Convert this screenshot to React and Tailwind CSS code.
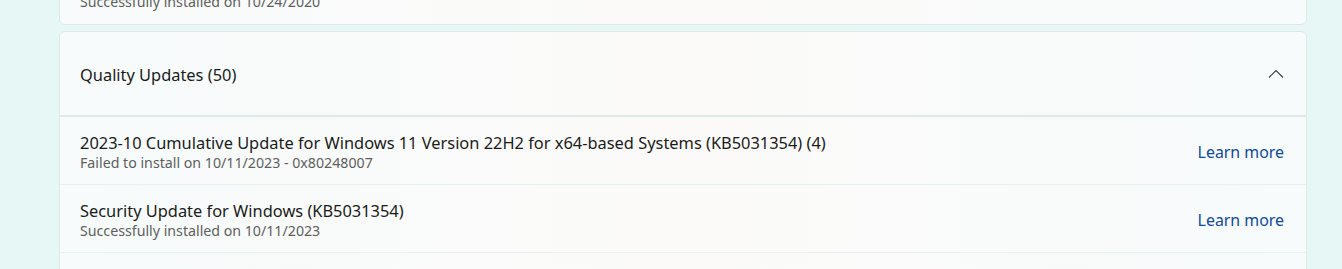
import { useState } from "react";

const UPDATES = [
  {
    title: "2023-10 Cumulative Update for Windows 11 Version 22H2 for x64-based Systems (KB5031354) (4)",
    status: "Failed to install on 10/11/2023 - 0x80248007",
  },
  {
    title: "Security Update for Windows (KB5031354)",
    status: "Successfully installed on 10/11/2023",
  },
];

function ChevronUp() {
  return (
    <svg width="16" height="10" viewBox="0 0 16 10" fill="none" className="text-[#3d3d3d]">
      <path d="M1 8.5L8 1.5L15 8.5" stroke="currentColor" strokeWidth="1.1" />
    </svg>
  );
}

function UpdateRow({ item }) {
  return (
    <div className="flex items-center justify-between h-[68px] pt-[2px] pl-[20px] pr-[22px] border-b border-[#e3f1ef]">
      <div className="flex flex-col">
        <span className="text-[16.4px] leading-[21px] text-[#1b1b1b]">{item.title}</span>
        <span className="text-[14.2px] leading-[19px] text-[#5e5e5e]">{item.status}</span>
      </div>
      <a className="mt-[3px] text-[15.9px] text-[#0f4a97] cursor-pointer">Learn more</a>
    </div>
  );
}

export default function App() {
  const [open, setOpen] = useState(true);

  return (
    <div
      className="w-[1342px] h-[269px] overflow-hidden bg-[#e6f7f5] pl-[59px] pr-[35px]"
      style={{ fontFamily: '"Noto Sans", "Open Sans", sans-serif' }}
    >
      {/* previous section, mostly scrolled out */}
      <div className="-mt-[41px] h-[66px] flex items-end pb-[13px] pl-[20px] rounded-b-[6px] border border-[#dcebe8] bg-gradient-to-r from-[#f8fbfb] via-[#fbfaf8] to-[#f7fbfb]">
        <span className="text-[14.2px] leading-[19px] text-[#5e5e5e]">Successfully installed on 10/24/2020</span>
      </div>

      <div className="mt-[6px] rounded-t-[6px] border border-[#dcebe8] bg-gradient-to-r from-[#f7fbfb] via-[#fbfaf9] to-[#f7fbfb]">
        <button
          className="w-full h-[85px] flex items-center justify-between pt-[4px] pl-[20px] pr-[22px] border-b-2 border-[#dbeae7]"
          onClick={() => setOpen(!open)}
        >
          <span className="text-[16.4px] text-[#1b1b1b]">Quality Updates (50)</span>
          <span className="-mt-[4px]">
            <ChevronUp />
          </span>
        </button>
        {open && (
          <div className="flex flex-col">
            {UPDATES.map((u) => (
              <UpdateRow key={u.title} item={u} />
            ))}
            <div className="h-[20px]" />
          </div>
        )}
      </div>
    </div>
  );
}
